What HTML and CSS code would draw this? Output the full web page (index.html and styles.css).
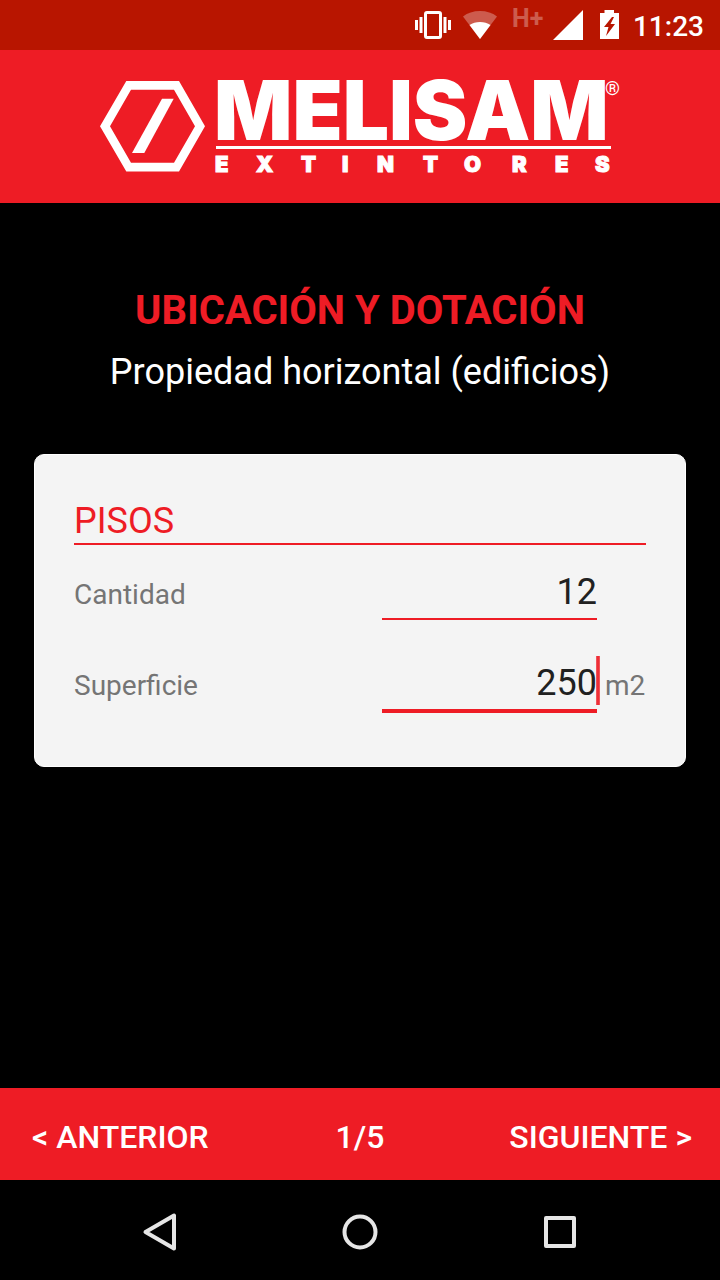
FILE: index.html
```html
<!DOCTYPE html>
<html lang="es">
<head>
    <meta charset="UTF-8">
    <meta name="viewport" content="width=device-width, initial-scale=1.0">
    <title>Melisam Extintores</title>
    <link rel="stylesheet" href="styles.css">
</head>
<body>
    <div class="status-bar">
        <svg width="36" height="30" viewBox="0 0 36 30" fill="#fff">
            <rect x="10.5" y="2.5" width="15" height="25" rx="1.5" fill="none" stroke="#fff" stroke-width="3"/>
            <rect x="0" y="10" width="3" height="10"/>
            <rect x="4.5" y="7" width="3" height="16"/>
            <rect x="28.5" y="7" width="3" height="16"/>
            <rect x="33" y="10" width="3" height="10"/>
        </svg>
        <svg width="38" height="30" viewBox="0 0 38 30" fill="#fff">
            <path d="M17 29 L0 6.500 Q7 1 17 1 T34 6.500 Z" opacity=".3"/>
            <path d="M17 29 L6.500 15 Q11 12 17 12 T27.500 15 Z"/>
        </svg>
        <svg width="70" height="32" viewBox="0 0 70 32">
            <text class="network" x="-1" y="18">H+</text>
            <path d="M40 31 L70 31 L70 1 Z" fill="#fff"/>
        </svg>
        <svg width="26" height="30" viewBox="0 0 26 30">
            <path d="M9.500 0 H19 V3 H24 V29 H5 V3 H9.500 Z" fill="#fff"/>
            <path d="M17 7 L9 17 H13.500 L11 26 L20 14 H15.500 L19 7 Z" fill="#b81500"/>
        </svg>
        <span class="time">11:23</span>
    </div>

    <header class="header">
        <svg class="logo" viewBox="0 0 520 91" fill="#fff">
            <path fill-rule="evenodd" d="M0 45.300 L26.300 0 H79 L105 45.300 L79 90.500 H26.300 Z M10 45.300 L31 81.700 H74 L95 45.300 L74 8.700 H31 Z"/>
            <path d="M62 17.700 H73.700 L44.300 72 H32 Z"/>
            <text class="logo-name" x="114" y="59">MELISAM</text>
            <rect x="116" y="65" width="395" height="3"/>
            <text class="logo-sub" x="115 156 201 242 277 323 364 412 455 495" y="91">EXTINTORES</text>
            <text class="logo-mark" x="505" y="14">®</text>
        </svg>
    </header>

    <main class="content">
        <h1>UBICACIÓN Y DOTACIÓN</h1>
        <p class="subtitle">Propiedad horizontal (edificios)</p>

        <form class="card">
            <h2>PISOS</h2>
            <div class="field">
                <label for="cantidad">Cantidad</label>
                <div class="input-box">
                    <input type="text" inputmode="numeric" id="cantidad" value="12">
                </div>
            </div>
            <div class="field active">
                <label for="superficie">Superficie</label>
                <div class="input-box">
                    <input type="text" inputmode="numeric" id="superficie" value="250">
                    <span class="caret"></span>
                </div>
                <span class="unit">m2</span>
            </div>
        </form>
    </main>

    <footer class="pager">
        <button type="button" class="prev">&lt; ANTERIOR</button>
        <span>1/5</span>
        <button type="button" class="next">SIGUIENTE &gt;</button>
    </footer>

    <nav class="nav-bar">
        <button type="button" aria-label="Atrás">
            <svg width="40" height="40" viewBox="0 0 40 40">
                <path d="M34 3.500 V36.500 L5.500 20 Z"/>
            </svg>
        </button>
        <button type="button" aria-label="Inicio">
            <svg width="40" height="40" viewBox="0 0 40 40">
                <circle cx="20" cy="20" r="15.500"/>
            </svg>
        </button>
        <button type="button" aria-label="Recientes">
            <svg width="40" height="40" viewBox="0 0 40 40">
                <rect x="6" y="6" width="28" height="28"/>
            </svg>
        </button>
    </nav>
</body>
</html>
```
FILE: styles.css
```css
* {
    box-sizing: border-box;
}
body {
    display: flex;
    flex-direction: column;
    min-height: 100vh;
    margin: 0;
    background-color: #000;
    color: #fff;
    font-family: Roboto, sans-serif;
}
svg {
    display: block;
    overflow: visible;
}
button {
    padding: 0;
    border: none;
    background: none;
    color: inherit;
    font: inherit;
    cursor: pointer;
}

/* Status bar */
.status-bar {
    display: flex;
    align-items: center;
    justify-content: flex-end;
    gap: 12px;
    height: 50px;
    padding-right: 16px;
    background-color: #b81500;
}
.network {
    font-size: 25px;
    font-weight: bold;
    fill: #fff;
    opacity: 0.3;
}
.time {
    padding-top: 2px;
    font-size: 28px;
    font-weight: 500;
}

/* Header */
.header {
    padding: 31px 100px;
    background-color: #ee1c25;
}
.logo {
    width: 100%;
    max-width: 520px;
    margin: 0 auto;
}
.logo-name {
    font-family: Inter, sans-serif;
    font-size: 82px;
    font-weight: 900;
}
.logo-sub {
    font-family: Inter, sans-serif;
    font-size: 22px;
    font-weight: 900;
    stroke: #fff;
    stroke-width: 1px;
}
.logo-mark {
    font-size: 19px;
}

/* Content */
.content {
    flex: 1;
    padding: 84px 34px 0;
}
h1 {
    margin: 0;
    color: #ee1c25;
    font-size: 40px;
    font-weight: bold;
    line-height: 48px;
    text-align: center;
}
.subtitle {
    margin: 15px 0 60px;
    font-size: 36px;
    line-height: 44px;
    text-align: center;
}
.card {
    padding: 44px 39px 53px;
    border: 1px solid #fff;
    border-radius: 10px;
    background-color: #f4f4f4;
}
h2 {
    margin: 0 0 18px;
    border-bottom: 2px solid #ee1c25;
    color: #ee1c25;
    font-size: 36px;
    font-weight: normal;
    line-height: 44px;
}
.field {
    display: grid;
    grid-template-columns: 1fr 215px 41px;
    gap: 8px;
    align-items: baseline;
    color: #757575;
    font-size: 28px;
}
.field + .field {
    margin-top: 34px;
}
.input-box {
    position: relative;
}
.field input {
    display: block;
    width: 100%;
    padding: 8px 0 5px;
    border: none;
    border-bottom: 2px solid #ee1c25;
    border-radius: 0;
    outline: none;
    background: none;
    color: #212121;
    font-family: inherit;
    font-size: 36px;
    line-height: 42px;
    text-align: right;
}
.field.active input {
    border-bottom-width: 4px;
}
.caret {
    position: absolute;
    top: 2px;
    right: -3px;
    width: 4px;
    height: 49px;
    background: linear-gradient(to right, #f0656b, #ee1c25 50%, #f0656b);
}

/* Bottom pager */
.pager {
    display: grid;
    grid-template-columns: 1fr auto 1fr;
    align-items: center;
    height: 92px;
    padding: 6px 28px 0;
    background-color: #ee1c25;
    font-size: 32px;
    font-weight: 500;
}
.prev {
    justify-self: start;
    padding-left: 4px;
}
.next {
    justify-self: end;
}

/* Navigation bar */
.nav-bar {
    display: grid;
    grid-template-columns: repeat(3, 1fr);
    justify-items: center;
    align-items: center;
    height: 100px;
    padding: 4px 60px 0;
}
.nav-bar svg {
    fill: none;
    stroke: #e6e6e6;
    stroke-width: 4;
    stroke-linejoin: round;
}
```
